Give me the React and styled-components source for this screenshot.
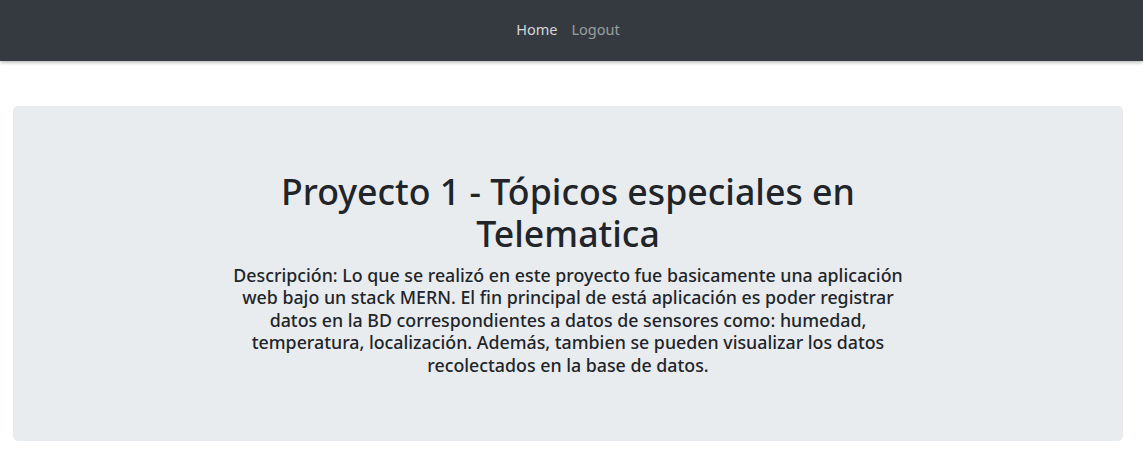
import React from "react";
import styled, { createGlobalStyle } from "styled-components";

const GlobalStyle = createGlobalStyle`
    body {
        margin: 0;
        background: #fff;
        font-family: "Noto Sans", "Open Sans", sans-serif;
        color: #212529;
    }
`;

export default () => {
    return (
        <>
            <GlobalStyle />
            <Navbar>
                <NavLink active href="#">Home</NavLink>
                <NavLink href="#">Logout</NavLink>
            </Navbar>
            <Jumbotron>
                <Column>
                    <Title>Proyecto 1 - Tópicos especiales en Telematica</Title>
                    <Description>
                        Descripción: Lo que se realizó en este proyecto fue basicamente una
                        aplicación web bajo un stack MERN. El fin principal de está aplicación
                        es poder registrar datos en la BD correspondientes a datos de sensores
                        como: humedad, temperatura, localización. Además, tambien se pueden
                        visualizar los datos recolectados en la base de datos.
                    </Description>
                </Column>
            </Jumbotron>
        </>
    );
};

const Navbar = styled.nav`
    height: 61px;
    box-sizing: border-box;
    padding: 0 7px 3px 0;
    background: #343a40;
    display: flex;
    justify-content: center;
    align-items: center;
    box-shadow: 0 1px 4px rgba(0, 0, 0, 0.35);
`;

const NavLink = styled.a`
    padding: 0 7px;
    font-size: 14.5px;
    text-decoration: none;
    color: ${({ active }) =>
        active ? "rgba(255, 255, 255, 0.8)" : "rgba(255, 255, 255, 0.5)"};
`;

const Jumbotron = styled.div`
    margin: 45px 20px 10px 13px;
    padding: 64px 32px 65px;
    background: #e9ecef;
    border-radius: 5px;
    display: flex;
    justify-content: center;
`;

const Column = styled.div`
    width: 690px;
    text-align: center;
`;

const Title = styled.h1`
    margin: 0;
    font-size: 35.7px;
    font-weight: 500;
    line-height: 42px;
`;

const Description = styled.h5`
    margin: 10px 0 0;
    font-size: 17.8px;
    font-weight: 500;
    line-height: 22.4px;
`;
